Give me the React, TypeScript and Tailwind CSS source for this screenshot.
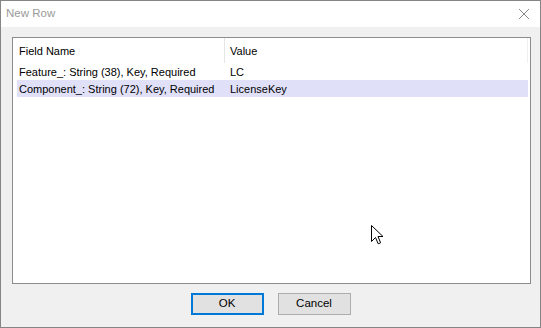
import React from "react";

const font = { fontFamily: '"Liberation Sans", Arial, sans-serif' };

export default function App() {
  return (
    <div
      className="relative w-[541px] h-[328px] border border-[#858585] bg-[#f0f0f0] flex flex-col text-[11px] text-black overflow-hidden whitespace-nowrap"
      style={font}
    >
      {/* Title bar */}
      <div className="h-[26px] bg-white flex items-center justify-between shrink-0">
        <span className="pl-[5px] text-[#9a9a9a] text-[11.5px]">New Row</span>
        <svg width="12" height="12" viewBox="0 0 12 12" className="mr-[10px]">
          <path d="M1 1 L11 11 M11 1 L1 11" stroke="#8a8a8a" strokeWidth="1" fill="none" />
        </svg>
      </div>

      {/* Body */}
      <div className="flex flex-col pl-[11px] pt-[10px]">
        <div className="w-[519px] h-[247px] bg-white border border-[#8c8c8c] flex flex-col">
          {/* Header */}
          <div className="h-[25px] flex items-center shrink-0">
            <div className="w-[212px] h-full flex items-center pl-[6px] pt-[2px] border-r border-[#e5e5e5]">
              Field Name
            </div>
            <div className="flex-1 h-full flex items-center pl-[5px] pt-[2px] border-r border-[#f0f0f0] mr-[2px]">
              Value
            </div>
          </div>
          {/* Rows */}
          <div className="h-[17px] flex items-center pt-[1px] ml-[4px] mr-[2px]">
            <div className="w-[208px] pl-[2px]">Feature_: String (38), Key, Required</div>
            <div className="pl-[5px]">LC</div>
          </div>
          <div className="h-[17px] flex items-center pt-[1px] ml-[4px] mr-[2px] bg-[#e0e0f9]">
            <div className="w-[208px] pl-[2px]">Component_: String (72), Key, Required</div>
            <div className="pl-[5px]">LicenseKey</div>
          </div>
        </div>
      </div>

      {/* Buttons */}
      <div className="flex justify-center gap-[14px] mt-[9px]">
        <button className="w-[73px] h-[22px] bg-[#e1e1e1] border-2 border-[#0078d7] flex items-center justify-center text-[11.5px]">
          OK
        </button>
        <button className="w-[73px] h-[22px] bg-[#e1e1e1] border border-[#adadad] flex items-center justify-center text-[11.5px]">
          Cancel
        </button>
      </div>

      {/* Mouse cursor */}
      <svg
        className="absolute left-[370px] top-[224px]"
        width="13"
        height="20"
        viewBox="0 0 13 20"
      >
        <path
          d="M0.5 0.5 L0.5 16.5 L4.5 12.5 L7.2 18.8 L9.6 17.8 L7 11.5 L12 11.5 Z"
          fill="white"
          stroke="black"
          strokeWidth="1"
          strokeLinejoin="miter"
        />
      </svg>
    </div>
  );
}
